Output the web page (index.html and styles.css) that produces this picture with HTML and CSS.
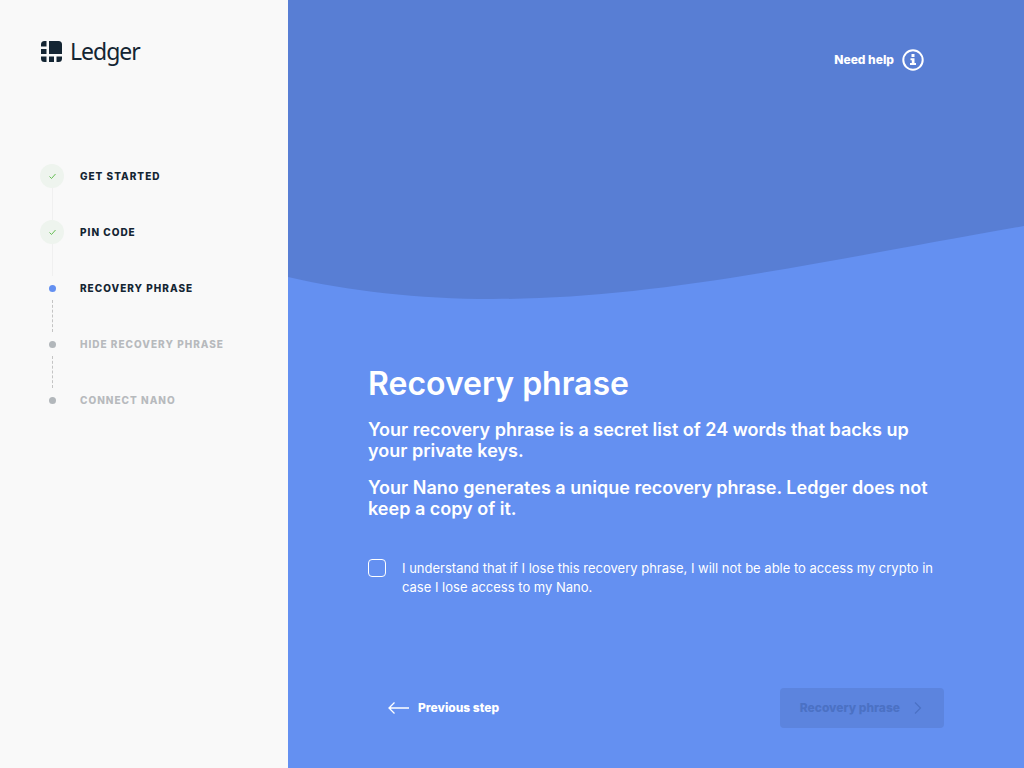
FILE: index.html
```html
<!DOCTYPE html>
<html lang="en">
<head>
<meta charset="utf-8">
<meta name="viewport" content="width=device-width, initial-scale=1">
<title>Recovery phrase</title>
<link rel="stylesheet" href="styles.css">
</head>
<body>
<div class="app">
  <aside class="sidebar">
    <div class="logo">
      <svg width="22" height="22" viewBox="0 0 22 22" fill="#142533" aria-hidden="true">
        <path d="M8 0h9.500a3.500 3.500 0 0 1 3.500 3.500V13H8zM5.500 0v5.500H0V3.500A3.500 3.500 0 0 1 3.500 0zM0 8h5.500v5H0zM8 15.500h5v5.500H8zM0 15.500h5.500V21h-2A3.500 3.500 0 0 1 0 17.500zM15.500 15.500H21v2a3.500 3.500 0 0 1-3.500 3.500h-2z"/>
      </svg>
      <span class="wordmark">Ledger</span>
    </div>
    <ol class="steps">
      <li class="step done"><span class="rail"><span class="marker"><svg width="8" height="8" viewBox="0 0 8 8" aria-hidden="true"><path d="M1.500 4.500 3.500 6.500 7.500 2" fill="none" stroke="#66be54"/></svg></span></span><span>GET STARTED</span></li>
      <li class="step done"><span class="rail"><span class="marker"><svg width="8" height="8" viewBox="0 0 8 8" aria-hidden="true"><path d="M1.500 4.500 3.500 6.500 7.500 2" fill="none" stroke="#66be54"/></svg></span></span><span>PIN CODE</span></li>
      <li class="step current" aria-current="step"><span class="rail"><span class="marker"></span></span><span>RECOVERY PHRASE</span></li>
      <li class="step pending"><span class="rail"><span class="marker"></span></span><span>HIDE RECOVERY PHRASE</span></li>
      <li class="step pending"><span class="rail"><span class="marker"></span></span><span>CONNECT NANO</span></li>
    </ol>
  </aside>
  <main class="main">
    <svg class="wave" viewBox="0 0 736 300" preserveAspectRatio="none" aria-hidden="true"><path fill="#587ed4" d="M0 0H736V226C520 264 365 299 205 299C130 299 60 291 0 277z"/></svg>
    <header class="top">
      <button class="help" type="button"><span class="caption">Need help</span>
        <svg width="22" height="22" viewBox="0 0 22 22" aria-hidden="true"><circle cx="11" cy="11" r="9.700" fill="none" stroke="#fff" stroke-width="2"/><path fill="#fff" d="M9.500 5h3v3h-3zM8.500 9.200h4v4.800H14v2H8v-2h1.800v-2.800H8.500z"/></svg>
      </button>
    </header>
    <section class="content">
      <h1>Recovery phrase</h1>
      <p>Your recovery phrase is a secret list of 24 words that backs up your private keys.</p>
      <p>Your Nano generates a unique recovery phrase. Ledger does not keep a copy of it.</p>
      <label class="agree"><input type="checkbox"><span>I understand that if I lose this recovery phrase, I will not be able to access my crypto in case I lose access to my Nano.</span></label>
    </section>
    <footer class="actions">
      <button class="btn" type="button"><svg width="22" height="14" viewBox="0 0 22 14" aria-hidden="true"><path d="M6.500 1.500 1 7l5.500 5.500M1 7h20" fill="none" stroke="currentColor" stroke-width="1.300"/></svg><span class="caption">Previous step</span></button>
      <button class="btn next" type="button" disabled><span class="caption">Recovery phrase</span><svg width="12" height="12" viewBox="0 0 12 12" aria-hidden="true"><path d="M3 .5 8.500 6 3 11.500" fill="none" stroke="currentColor" stroke-width="1.200"/></svg></button>
    </footer>
  </main>
</div>
</body>
</html>
```
FILE: styles.css
```css
* { box-sizing: border-box; }
body { margin: 0; font-family: Inter, "Liberation Sans", sans-serif; color: #142533; }
button { font: inherit; border: 0; background: none; color: inherit; cursor: pointer; }
.app { display: flex; min-height: 100vh; }

.sidebar { flex: 0 0 288px; padding: 36px 40px; background: #f9f9f9; }
.logo { display: flex; align-items: center; gap: 7px; height: 32px; padding-left: 1px; }
.wordmark { padding-bottom: 2px; font-family: "Noto Sans", "Open Sans", sans-serif; font-size: 23px; line-height: 30px; letter-spacing: -1px; }
.steps { list-style: none; margin: 96px 0 0; padding: 0; }
.step { display: flex; gap: 16px; min-height: 56px; font-size: 10px; font-weight: 800; line-height: 24px; letter-spacing: 1px; }
.rail { display: flex; flex-direction: column; align-items: center; width: 24px; }
.marker { display: flex; flex: none; align-items: center; justify-content: center; width: 24px; height: 24px; border-radius: 50%; }
.done .marker { background: #eef4ee; }
.current .marker::before, .pending .marker::before { content: ""; width: 7px; height: 7px; border-radius: 50%; background: #b2b7bb; }
.current .marker::before { background: #6490f1; }
.step:not(:last-child) .rail::after { content: ""; flex: 1; border-left: 1px dashed #c4c4c4; }
.step.done .rail::after { border-left: 1px solid #f0f0f0; }
.pending { color: #b7babd; }

.main { position: relative; flex: 1; min-width: 0; display: flex; flex-direction: column; background: #6490f1; color: #fff; }
.wave { position: absolute; top: 0; left: 0; width: 100%; height: 300px; }
.top { position: relative; display: flex; justify-content: flex-end; padding: 40px 80px 0; }
.help { display: flex; align-items: center; gap: 8px; height: 40px; padding: 0 20px; font-size: 12px; font-weight: 800; }
.caption { padding-bottom: 2px; }
.content { flex: 1; padding: 284px 80px 40px; }
h1 { margin: 0 0 16px; font-size: 32px; font-weight: 600; line-height: 39px; }
p { margin: 0 0 16px; font-size: 18px; font-weight: 600; line-height: 21px; }
.agree { display: flex; gap: 16px; margin-top: 40px; font-size: 13px; line-height: 19px; }
.agree input { appearance: none; flex: none; width: 18px; height: 18px; margin: 0; border: 1px solid #fff; border-radius: 4px; }
.agree input:checked { background: #fff; }
.actions { display: flex; justify-content: space-between; padding: 0 80px 40px; }
.btn { display: flex; align-items: center; gap: 8px; height: 40px; padding: 0 20px; border-radius: 4px; font-size: 12px; font-weight: 800; }
.next { gap: 12px; background: #5c84de; color: #4b71c4; cursor: default; }
```
